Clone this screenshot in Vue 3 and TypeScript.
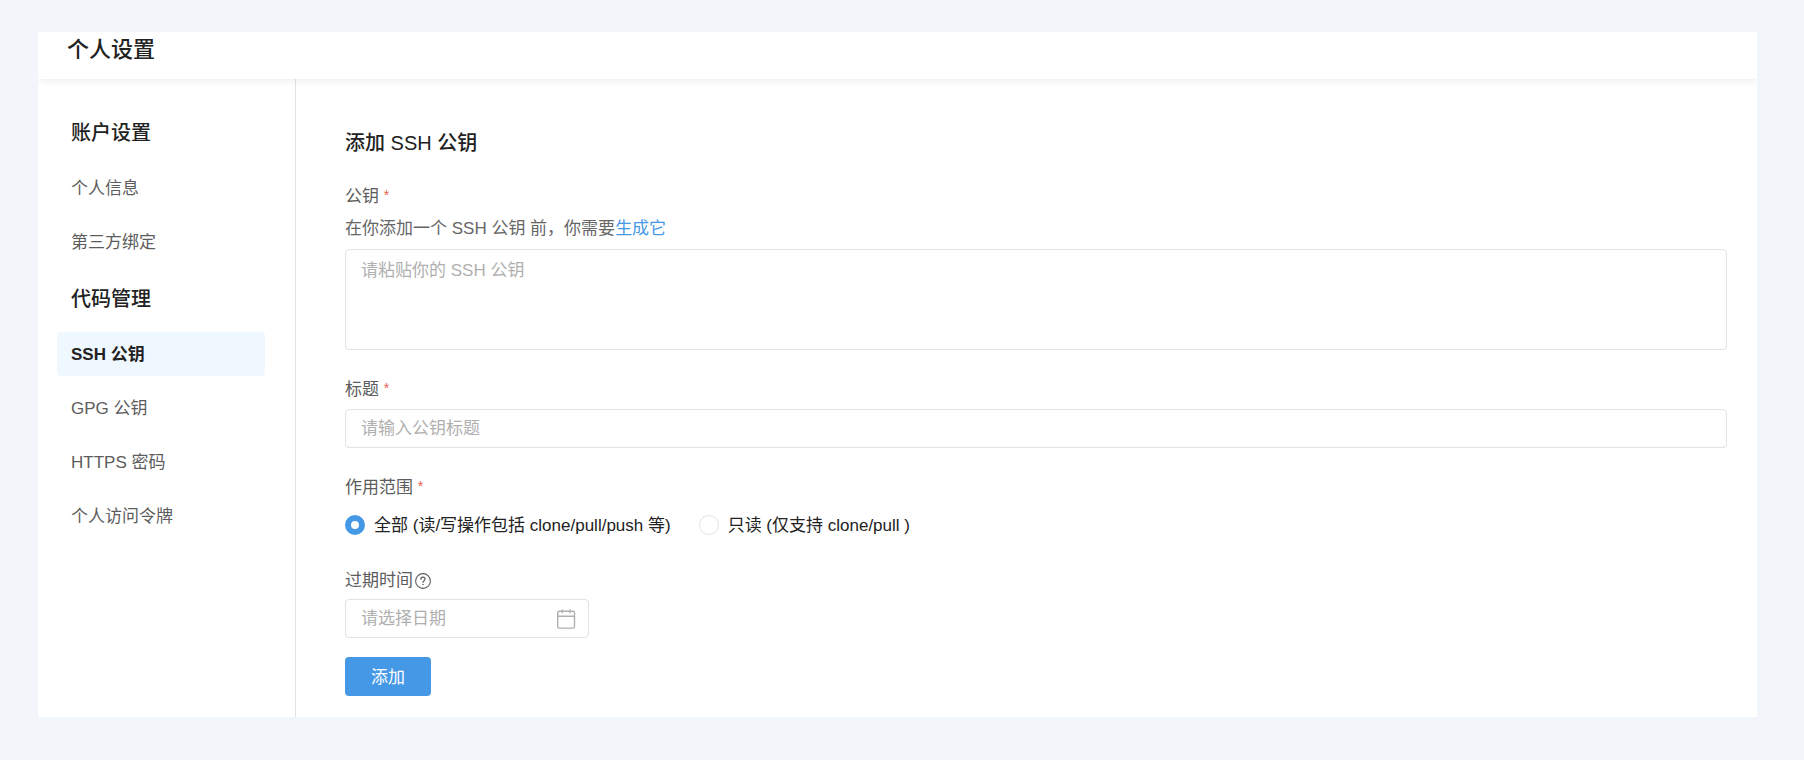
<script setup lang="ts">
import { ref } from 'vue'

interface NavItem {
  label: string
  active?: boolean
}

interface NavGroup {
  title: string
  items: NavItem[]
}

const groups: NavGroup[] = [
  { title: '账户设置', items: [{ label: '个人信息' }, { label: '第三方绑定' }] },
  {
    title: '代码管理',
    items: [
      { label: 'SSH 公钥', active: true },
      { label: 'GPG 公钥' },
      { label: 'HTTPS 密码' },
      { label: '个人访问令牌' },
    ],
  },
]

const scopes = [
  { value: 'all', label: '全部 (读/写操作包括 clone/pull/push 等)' },
  { value: 'read', label: '只读 (仅支持 clone/pull )' },
]

const publicKey = ref('')
const keyTitle = ref('')
const scope = ref('all')
const expiry = ref('')
</script>

<template>
  <div class="page">
    <div class="panel">
      <header class="header">
        <h1>个人设置</h1>
      </header>
      <div class="body">
        <nav class="sidebar" aria-label="个人设置">
          <template v-for="group in groups" :key="group.title">
            <h2>{{ group.title }}</h2>
            <a
              v-for="item in group.items"
              :key="item.label"
              href="#"
              class="nav-item"
              :class="{ active: item.active }"
              :aria-current="item.active ? 'page' : undefined"
            >{{ item.label }}</a>
          </template>
        </nav>
        <main class="content">
          <h2 class="title">添加 SSH 公钥</h2>
          <form @submit.prevent>
            <div class="field">
              <label class="label" for="public-key">公钥 <span class="required">*</span></label>
              <p class="hint">在你添加一个 SSH 公钥 前，你需要<a href="#">生成它</a></p>
              <textarea id="public-key" v-model="publicKey" class="control" placeholder="请粘贴你的 SSH 公钥"></textarea>
            </div>
            <div class="field">
              <label class="label" for="key-title">标题 <span class="required">*</span></label>
              <input id="key-title" v-model="keyTitle" class="control" type="text" placeholder="请输入公钥标题">
            </div>
            <fieldset class="field scope">
              <legend class="label">作用范围 <span class="required">*</span></legend>
              <div class="radios">
                <label v-for="option in scopes" :key="option.value" class="radio">
                  <input v-model="scope" type="radio" name="scope" :value="option.value">
                  <span>{{ option.label }}</span>
                </label>
              </div>
            </fieldset>
            <div class="field expiry">
              <label class="label" for="expiry">
                过期时间<svg class="help" viewBox="0 0 16 16" fill="none" stroke="currentColor" stroke-linecap="round" stroke-linejoin="round" aria-hidden="true">
                  <circle cx="8" cy="8" r="7.4" stroke-width="1.1" />
                  <path d="M5.9 6.3C5.9 5 6.8 4.2 8 4.2s2.1.8 2.1 1.9c0 1.5-2.1 1.7-2.1 3.2" stroke-width="1.2" />
                  <circle cx="8" cy="11.6" r=".75" fill="currentColor" stroke="none" />
                </svg>
              </label>
              <div class="control date">
                <input id="expiry" v-model="expiry" type="text" placeholder="请选择日期">
                <svg class="calendar" viewBox="0 0 20 20" fill="none" stroke="currentColor" stroke-width="1.4" stroke-linecap="round" aria-hidden="true">
                  <rect x="1.7" y="2.2" width="16.8" height="16.9" rx="1.6" />
                  <path d="M1.7 7.2h16.8M6.2.9v2.8M14 .9v2.8" />
                </svg>
              </div>
            </div>
            <button class="submit" type="submit">添加</button>
          </form>
        </main>
      </div>
    </div>
  </div>
</template>

<style>
body {
  margin: 0;
  background: #f2f6fb;
}
</style>

<style scoped>
.page {
  box-sizing: border-box;
  min-height: 100vh;
  display: flex;
  flex-direction: column;
  padding: 32px 47px 43px 38px;
  color: #222;
  font: 17px/24px "Liberation Sans", "Noto Sans CJK SC", sans-serif;
}

.page *,
.page *::before {
  box-sizing: border-box;
}

h1,
h2,
p {
  margin: 0;
}

h1,
h2 {
  font-weight: 500;
}

.panel {
  flex: 1;
  display: flex;
  flex-direction: column;
  background: #fff;
}

.header {
  padding: 4px 29px 15px;
  box-shadow: 0 1px 8px rgba(0, 0, 0, 0.09);
  clip-path: inset(0 0 -12px);
}

.header h1 {
  font-size: 22px;
  line-height: 28px;
}

.body {
  flex: 1;
  display: flex;
}

.sidebar {
  flex: none;
  width: 258px;
  display: flex;
  flex-direction: column;
  gap: 10px;
  padding: 29px 30px 20px 19px;
  border-right: 1px solid #e2e2e2;
}

.sidebar h2 {
  padding: 2px 14px 0;
  font-size: 20px;
  line-height: 46px;
}

.nav-item {
  padding: 2px 14px 0;
  border-radius: 4px;
  color: #5c5c5c;
  line-height: 42px;
  text-decoration: none;
}

.nav-item.active {
  background: #f0f8ff;
  color: #222;
  font-weight: 600;
}

.content {
  flex: 1;
  min-width: 0;
  padding: 50px 30px 20px 49px;
}

.title {
  margin-bottom: 28px;
  font-size: 20px;
  line-height: 28px;
}

.field {
  display: flex;
  flex-direction: column;
  margin-bottom: 28px;
}

.label {
  display: block;
  margin-bottom: 7px;
  color: #5c5c5c;
}

.required {
  color: #e9604f;
  font-size: 14px;
  line-height: 1;
  vertical-align: 2px;
}

.hint {
  margin: 1px 0 8px;
  color: #666;
}

.hint a {
  color: #4598e6;
  text-decoration: none;
}

.control {
  width: 100%;
  height: 39px;
  margin: 0;
  padding: 1px 15px 0;
  border: 1px solid #e2e2e2;
  border-radius: 4px;
  background: #fff;
  color: #222;
  font: inherit;
  outline: none;
}

textarea.control {
  display: block;
  height: 101px;
  padding: 9px 15px;
  resize: none;
}

::placeholder {
  color: #b0b0b0;
  opacity: 1;
}

.scope {
  min-width: 0;
  margin: 0 0 31px;
  padding: 0;
  border: 0;
}

.scope .label {
  margin-bottom: 12px;
  padding: 0;
}

.radios {
  display: flex;
  gap: 28px;
}

.radio {
  display: flex;
  align-items: center;
  gap: 9px;
}

.radio span {
  padding-top: 2px;
}

.radio input {
  appearance: none;
  width: 20px;
  height: 20px;
  margin: 0;
  border: 1px solid #e2e2e2;
  border-radius: 50%;
  background: #fff;
}

.radio input:checked {
  border: 6px solid #4598e6;
}

.expiry {
  margin-bottom: 19px;
}

.expiry .label {
  display: flex;
  align-items: center;
  gap: 2px;
  margin-bottom: 6px;
}

.help {
  width: 16px;
  height: 16px;
}

.date {
  display: flex;
  align-items: center;
  width: 244px;
  padding-right: 12px;
}

.date input {
  flex: 1;
  min-width: 0;
  padding: 0;
  border: 0;
  background: none;
  color: inherit;
  font: inherit;
  outline: none;
}

.calendar {
  width: 20px;
  height: 20px;
  color: #b0b0b0;
}

.submit {
  height: 39px;
  padding: 2px 26px 0;
  border: 0;
  border-radius: 4px;
  background: #4598e6;
  color: #fff;
  font: inherit;
}
</style>
